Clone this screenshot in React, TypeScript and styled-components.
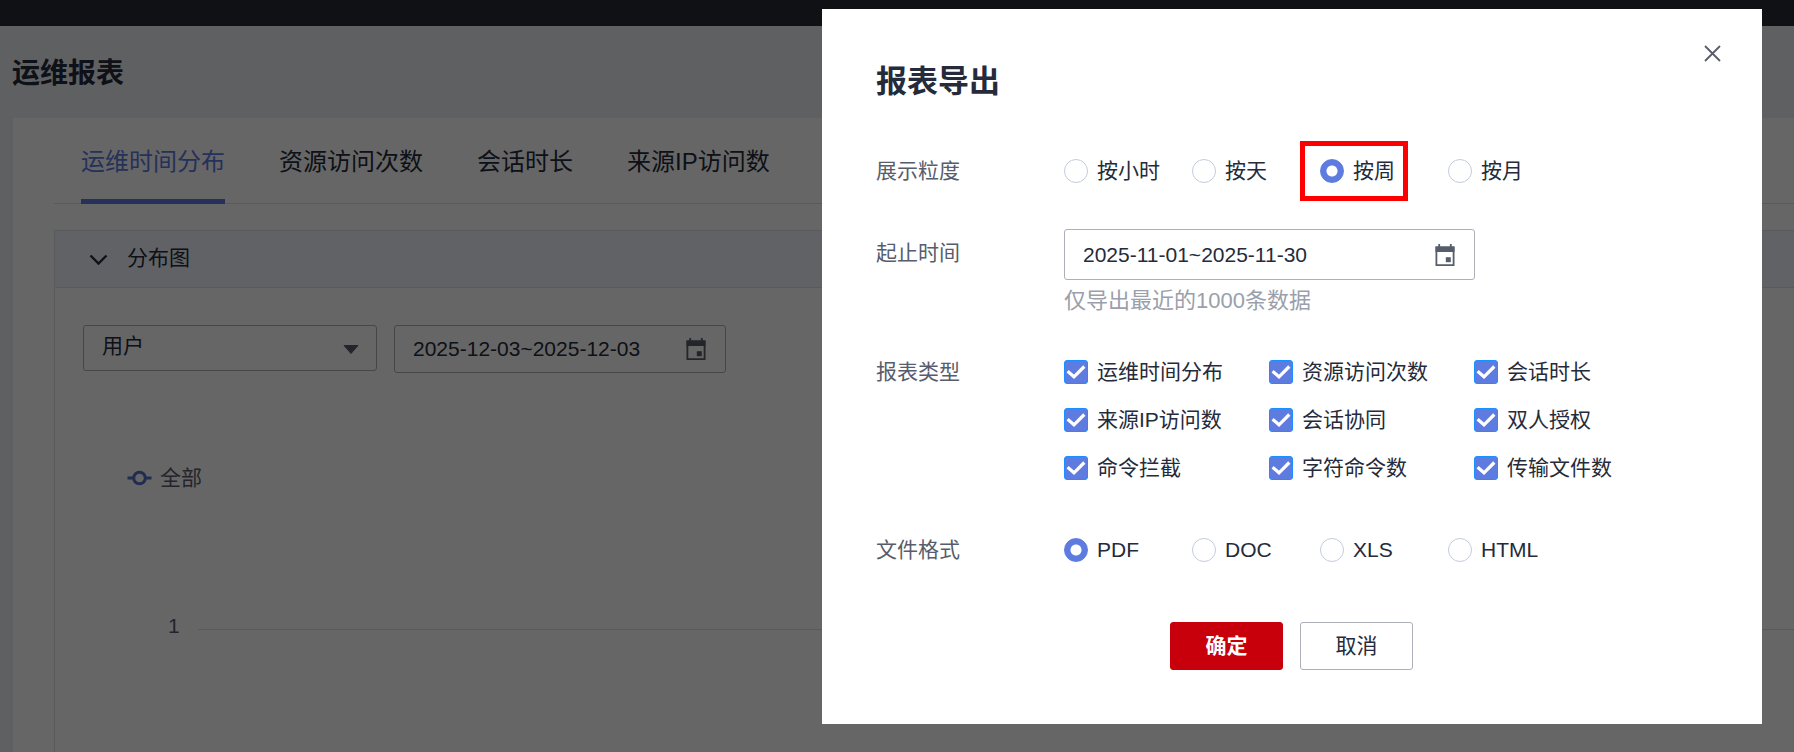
import React, { useState } from 'react';
import styled, { createGlobalStyle } from 'styled-components';

const GlobalStyle = createGlobalStyle`
  *, *::before, *::after { box-sizing: border-box; }
  body {
    margin: 0;
    color: #252b3a;
    font-family: "Liberation Sans", "Noto Sans CJK SC", sans-serif;
    font-size: 21px;
    line-height: 24px;
  }
  button, input, select { font: inherit; color: inherit; margin: 0; }
`;

/* ---------- report page ---------- */

const Page = styled.div`
  display: flex;
  flex-direction: column;
  min-height: 100vh;
  background: #edf0f5;
`;

const TopBar = styled.header`
  height: 26px;
  background: #282b35;
`;

const PageTitle = styled.h1`
  margin: 0;
  padding: 28px 12px 24px;
  font-size: 28px;
  line-height: 40px;
  font-weight: 700;
`;

const Card = styled.main`
  flex: 1;
  display: flex;
  flex-direction: column;
  margin-left: 13px;
  padding: 28px 0 0 41px;
  background: #fff;
`;

const Tabs = styled.nav`
  display: flex;
  gap: 54px;
  padding-left: 27px;
  box-shadow: inset 0 -1px #dfe1e6;
`;

const Tab = styled.button<{ $active?: boolean }>`
  height: 58px;
  padding: 0 0 22px;
  border: 0;
  border-bottom: 5px solid ${(p) => (p.$active ? '#5e7ce0' : 'transparent')};
  background: none;
  color: ${(p) => (p.$active ? '#5e7ce0' : '#252b3a')};
  font-size: 24px;
  line-height: 31px;
  white-space: nowrap;
`;

const Panel = styled.section`
  flex: 1;
  margin-top: 26px;
  border: 1px solid #dfe1e6;
  border-right: 0;
  border-bottom: 0;
`;

const PanelHead = styled.button`
  display: flex;
  align-items: center;
  gap: 19px;
  width: 100%;
  height: 57px;
  padding: 0 34px 2px;
  border: 0;
  border-bottom: 1px solid #dfe1e6;
  background: #f2f5fc;

  svg { margin-top: 2px; }
`;

const Filters = styled.div`
  display: flex;
  align-items: flex-start;
  gap: 17px;
  padding: 37px 28px;
`;

const SelectWrap = styled.div`
  position: relative;
  width: 294px;
`;

const Select = styled.select`
  appearance: none;
  display: block;
  width: 100%;
  height: 46px;
  padding: 0 18px 4px;
  border: 1px solid #adb0b8;
  border-radius: 3px;
  background: #fff;
`;

const Caret = styled.svg`
  position: absolute;
  right: 18px;
  top: 20px;
  pointer-events: none;
`;

const DateBox = styled.div<{ $size: 'filter' | 'form' }>`
  display: flex;
  align-items: center;
  width: ${(p) => (p.$size === 'form' ? 411 : 332)}px;
  height: ${(p) => (p.$size === 'form' ? 51 : 48)}px;
  padding: 0 19px 0 18px;
  border: 1px solid #adb0b8;
  border-radius: 3px;
  background: #fff;
`;

const DateInput = styled.input`
  flex: 1;
  min-width: 0;
  padding: 0;
  border: 0;
  outline: 0;
  background: none;
`;

const Legend = styled.div`
  display: flex;
  align-items: center;
  gap: 8px;
  padding: 56px 72px 0;
  color: #575d6c;
`;

const AxisRow = styled.div`
  display: flex;
  align-items: center;
  gap: 18px;
  padding: 124px 0 0 113px;
  color: #575d6c;
`;

const GridLine = styled.div`
  flex: 1;
  height: 1px;
  margin-top: 6px;
  background: #dfe1e6;
`;

/* ---------- export dialog ---------- */

const Overlay = styled.div`
  position: fixed;
  inset: 0;
  display: flex;
  justify-content: flex-end;
  align-items: flex-start;
  padding: 9px 32px;
  overflow: auto;
  background: rgba(0, 0, 0, 0.6);
`;

const Dialog = styled.form`
  width: 940px;
  max-width: 100%;
  padding: 26px 31px 54px 54px;
  background: #fff;
`;

const DialogHead = styled.div`
  display: flex;
  justify-content: space-between;
  align-items: flex-start;
`;

const DialogTitle = styled.h2`
  margin: 0;
  padding-top: 27px;
  font-size: 31px;
  line-height: 40px;
  font-weight: 700;
`;

const CloseButton = styled.button`
  display: flex;
  padding: 10px;
  border: 0;
  background: none;
`;

const Field = styled.fieldset<{ $gap: number }>`
  display: grid;
  grid-template-columns: 188px 1fr;
  margin: ${(p) => p.$gap}px 0 0;
  padding: 0;
  border: 0;
`;

const FieldLabel = styled.label<{ $boxed?: boolean }>`
  padding-top: ${(p) => (p.$boxed ? 12 : 0)}px;
  color: #575d6c;
`;

const Radios = styled.div`
  display: grid;
  grid-template-columns: repeat(4, 128px);
`;

const Checks = styled.div`
  display: grid;
  grid-template-columns: repeat(3, 205px);
  row-gap: 24px;
`;

const Option = styled.label<{ $marked?: boolean }>`
  position: relative;
  display: flex;
  align-items: center;
  gap: 9px;
  height: 24px;
  white-space: nowrap;

  ${(p) => p.$marked && `
    &::after {
      content: '';
      position: absolute;
      left: -20px;
      top: -18px;
      width: 108px;
      height: 60px;
      border: 5px solid #f00;
      pointer-events: none;
    }
  `}
`;

const Radio = styled.input`
  appearance: none;
  width: 24px;
  height: 24px;
  border: 1px solid #c3cbdc;
  border-radius: 50%;
  background: #fff;

  &:checked {
    border-color: #5e7ce0;
    background: radial-gradient(circle, #fff 5px, #5e7ce0 6px);
  }
`;

const Checkbox = styled.input`
  appearance: none;
  width: 24px;
  height: 24px;
  border: 1px solid #adb0b8;
  border-radius: 3px;

  &:checked {
    border-color: #1890ff;
    background: #5e7ce0;
  }
  &:not(:checked) + svg { display: none; }
`;

const Tick = styled.svg`
  position: absolute;
  left: 0;
  top: 0;
  pointer-events: none;
`;

const Hint = styled.p`
  margin: 9px 0 0;
  color: #9a9fab;
  font-size: 22px;
`;

const Actions = styled.div`
  display: flex;
  justify-content: center;
  gap: 17px;
  margin: 60px 24px 0 0;
`;

const ActionButton = styled.button<{ $primary?: boolean }>`
  width: 113px;
  height: 48px;
  padding: 0;
  border: 1px solid ${(p) => (p.$primary ? '#c7000b' : '#adb0b8')};
  border-radius: 3px;
  background: ${(p) => (p.$primary ? '#c7000b' : '#fff')};
  color: ${(p) => (p.$primary ? '#fff' : '#252b3a')};
  font-weight: ${(p) => (p.$primary ? 700 : 400)};
`;

const CalendarIcon = () => (
  <svg width="20" height="22" viewBox="0 0 20 22" fill="none" aria-hidden="true">
    <path d="M0.5 2.5h19v5.5h-19z" fill="#575d6c" />
    <path d="M1.4 3.4h17.2v17.7H1.4z" stroke="#575d6c" strokeWidth="1.8" />
    <path d="M4.2 0v3M15.8 0v3" stroke="#575d6c" strokeWidth="1.8" />
    <path d="M10.8 13.2h5v5h-5z" fill="#575d6c" />
  </svg>
);

const tabs = ['运维时间分布', '资源访问次数', '会话时长', '来源IP访问数'];
const periods = ['按小时', '按天', '按周', '按月'];
const reportTypes = [
  '运维时间分布', '资源访问次数', '会话时长',
  '来源IP访问数', '会话协同', '双人授权',
  '命令拦截', '字符命令数', '传输文件数',
];
const formats = ['PDF', 'DOC', 'XLS', 'HTML'];

export default function App() {
  const [period, setPeriod] = useState('按周');
  const [format, setFormat] = useState('PDF');

  return (
    <>
      <GlobalStyle />
      <Page>
        <TopBar />
        <PageTitle>运维报表</PageTitle>
        <Card>
          <Tabs>
            {tabs.map((name, i) => (
              <Tab key={name} type="button" $active={i === 0}>{name}</Tab>
            ))}
          </Tabs>
          <Panel>
            <PanelHead type="button">
              <svg width="19" height="12" viewBox="0 0 19 12" fill="none" aria-hidden="true">
                <path d="M1.5 2.5 9.5 10.5 17.5 2.5" stroke="#252b3a" strokeWidth="2.4" />
              </svg>
              分布图
            </PanelHead>
            <Filters>
              <SelectWrap>
                <Select aria-label="统计对象" defaultValue="用户">
                  <option>用户</option>
                </Select>
                <Caret width="16" height="9" viewBox="0 0 16 9" aria-hidden="true">
                  <path d="M1 0.5h14L8 8.5z" fill="#575d6c" stroke="#575d6c" strokeLinejoin="round" />
                </Caret>
              </SelectWrap>
              <DateBox $size="filter">
                <DateInput aria-label="统计时间" defaultValue="2025-12-03~2025-12-03" />
                <CalendarIcon />
              </DateBox>
            </Filters>
            <Legend>
              <svg width="25" height="16" viewBox="0 0 25 16" fill="none" aria-hidden="true">
                <path d="M0.5 8h6M18.5 8h6" stroke="#5470c6" strokeWidth="3" />
                <circle cx="12.5" cy="8" r="5.8" stroke="#5470c6" strokeWidth="3" />
              </svg>
              全部
            </Legend>
            <AxisRow>
              1
              <GridLine />
            </AxisRow>
          </Panel>
        </Card>
      </Page>

      <Overlay>
        <Dialog role="dialog" aria-labelledby="export-title" onSubmit={(e) => e.preventDefault()}>
          <DialogHead>
            <DialogTitle id="export-title">报表导出</DialogTitle>
            <CloseButton type="button" aria-label="关闭">
              <svg width="17" height="17" viewBox="0 0 17 17" aria-hidden="true">
                <path d="M1 1 16 16M16 1 1 16" stroke="#575d6c" strokeWidth="1.8" />
              </svg>
            </CloseButton>
          </DialogHead>

          <Field $gap={57}>
            <FieldLabel as="span">展示粒度</FieldLabel>
            <Radios>
              {periods.map((name) => (
                <Option key={name} $marked={name === '按周'}>
                  <Radio type="radio" name="period" checked={period === name} onChange={() => setPeriod(name)} />
                  {name}
                </Option>
              ))}
            </Radios>
          </Field>

          <Field $gap={46}>
            <FieldLabel htmlFor="range" $boxed>起止时间</FieldLabel>
            <div>
              <DateBox $size="form">
                <DateInput id="range" defaultValue="2025-11-01~2025-11-30" />
                <CalendarIcon />
              </DateBox>
              <Hint>仅导出最近的1000条数据</Hint>
            </div>
          </Field>

          <Field $gap={47}>
            <FieldLabel as="span">报表类型</FieldLabel>
            <Checks>
              {reportTypes.map((name) => (
                <Option key={name}>
                  <Checkbox type="checkbox" defaultChecked />
                  <Tick width="24" height="24" viewBox="0 0 24 24" fill="none" aria-hidden="true">
                    <path d="M3.6 11.3 10 16.8 20.3 6.5" stroke="#fff" strokeWidth="3.2" />
                  </Tick>
                  {name}
                </Option>
              ))}
            </Checks>
          </Field>

          <Field $gap={58}>
            <FieldLabel as="span">文件格式</FieldLabel>
            <Radios>
              {formats.map((name) => (
                <Option key={name}>
                  <Radio type="radio" name="format" checked={format === name} onChange={() => setFormat(name)} />
                  {name}
                </Option>
              ))}
            </Radios>
          </Field>

          <Actions>
            <ActionButton type="submit" $primary>确定</ActionButton>
            <ActionButton type="button">取消</ActionButton>
          </Actions>
        </Dialog>
      </Overlay>
    </>
  );
}
